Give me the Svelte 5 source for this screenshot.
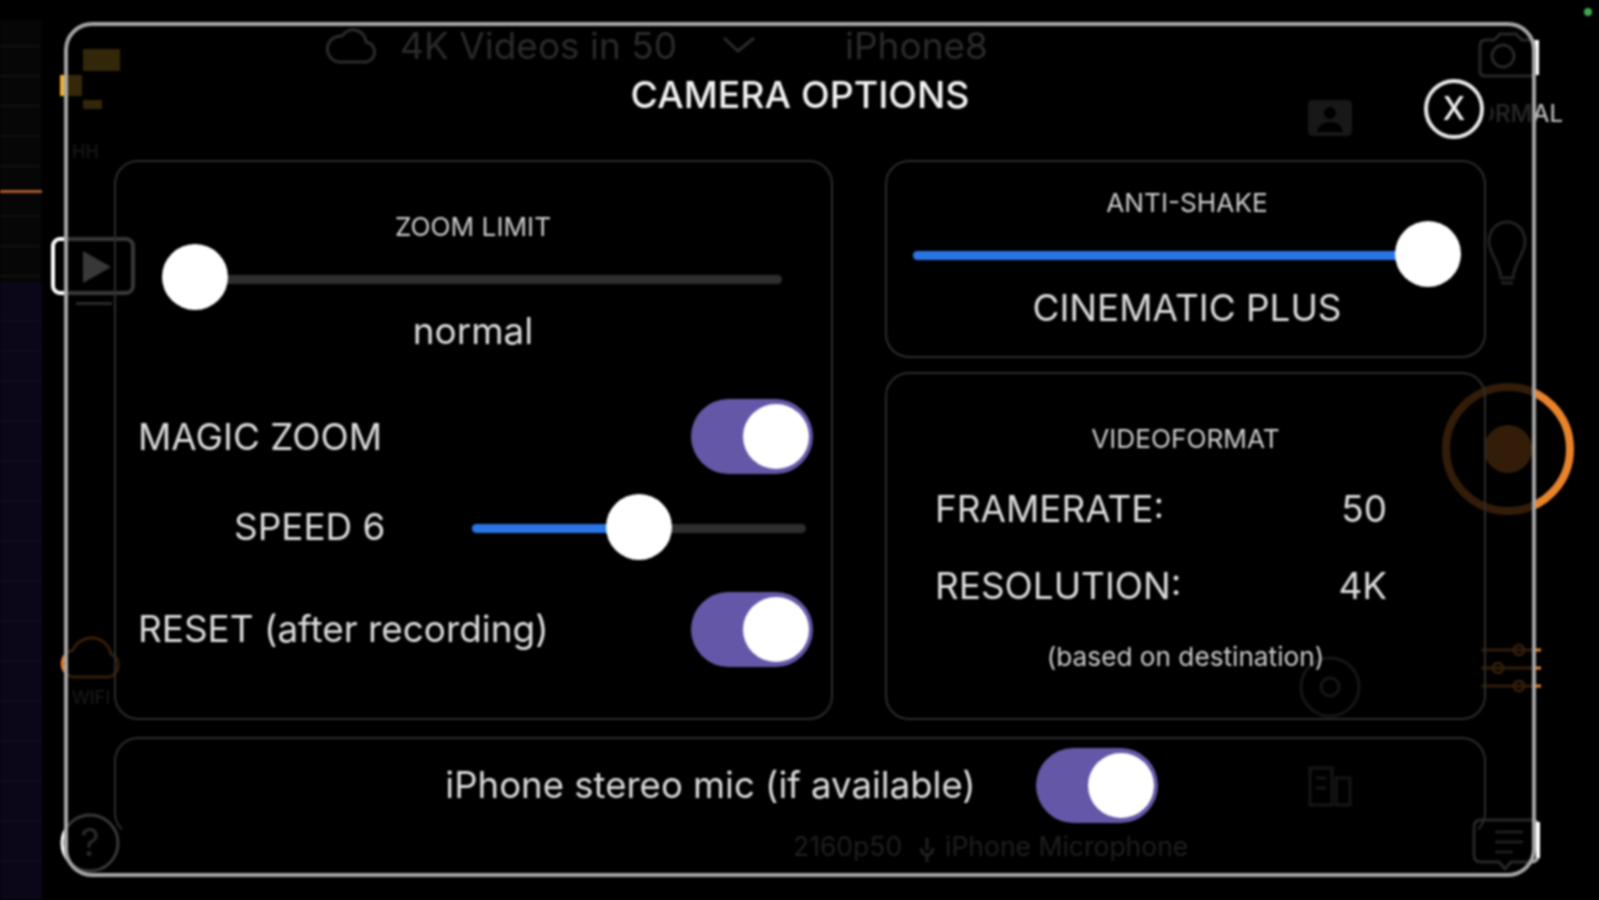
<script>
  // left strip rows behind the dimmed modal
  const stripRows = [45, 75, 105, 135, 165, 215, 245, 275, 320, 350, 380, 420, 460, 500, 540, 580, 620, 660, 700, 740, 780, 820, 860];

  let magicZoom = $state(true);
  let resetAfter = $state(true);
  let stereoMic = $state(true);

  let zoomLimit = $state(0);
  let speed = $state(50);
  let antiShake = $state(100);
</script>

{#snippet toggle(on, flip)}
  <button class="toggle" class:on aria-label="toggle" onclick={flip}><span class="knob"></span></button>
{/snippet}

{#snippet slider(value, cls)}
  <div class="slider {cls}" style="--pct: {value}">
    <div class="track"><div class="fill"></div></div>
    <div class="thumb"></div>
  </div>
{/snippet}

<div class="page">
  <svg class="backdrop" width="1599" height="900" viewBox="0 0 1599 900" aria-hidden="true">
    <rect x="0" y="20" width="42" height="262" fill="#060606" />
    <rect x="0" y="282" width="42" height="618" fill="#0b0718" />
    {#each stripRows as y}
      <rect x="0" {y} width="40" height="2" fill={y < 282 ? '#111' : '#100c1f'} />
    {/each}
    <rect x="0" y="190" width="42" height="3" fill="#a8552c" />

    <!-- top bar -->
    <path d="M339 62h24a10 10 0 0 0 3-20 13 13 0 0 0-24-6 11 11 0 0 0-3 26z" fill="none" stroke="#c4c4c4" stroke-width="3" />
    <text x="400" y="59" class="ghost-title">4K Videos in 50</text>
    <path d="M724 38l14 13 16-13" fill="none" stroke="#c4c4c4" stroke-width="3" />
    <text x="845" y="59" class="ghost-title">iPhone8</text>

    <!-- left tools -->
    <rect x="83" y="49" width="37" height="22" fill="#e9b02c" />
    <rect x="60" y="75" width="22" height="21" fill="#f0b030" />
    <rect x="83" y="100" width="19" height="9" fill="#e9b02c" />
    <text x="72" y="158" class="ghost-small">HH</text>
    <rect x="53" y="239" width="80" height="54" rx="7" fill="none" stroke="#fff" stroke-width="4" />
    <path d="M83 251l28 16-28 16z" fill="#fff" />
    <rect x="76" y="302" width="36" height="3" fill="#bbb" />
    <path d="M72 677h36a12 12 0 0 0 3-23 20 20 0 0 0-38-4 14 14 0 0 0-1 27z" fill="none" stroke="#e8832a" stroke-width="3" />
    <text x="72" y="704" class="ghost-small">WIFI</text>
    <circle cx="90" cy="843" r="28" fill="none" stroke="#fff" stroke-width="3" />
    <text x="90" y="856" class="ghost-q">?</text>

    <!-- right tools -->
    <path d="M1480 72V46q0-6 6-6h8l6-6h16l6 6h8q6 0 6 6v26q0 4-6 4h-44q-6 0-6-4z" fill="none" stroke="#b0b0b0" stroke-width="3" />
    <path d="M1537 40v35" stroke="#fff" stroke-width="4" />
    <circle cx="1503" cy="56" r="11" fill="none" stroke="#b0b0b0" stroke-width="3" />
    <text x="1563" y="122" text-anchor="end" class="ghost-normal">NORMAL</text>
    <path d="M1507 222c-12 0-18 10-18 20 0 12 11 20 12 36h12c1-16 12-24 12-36 0-10-6-20-18-20zM1501 283h12" fill="none" stroke="#999" stroke-width="3" />
    <circle cx="1508" cy="449" r="62" fill="none" stroke="#e8832a" stroke-width="8" />
    <circle cx="1508" cy="449" r="24" fill="#e8832a" />
    <g stroke="#e8832a" stroke-width="3" fill="none">
      <path d="M1481 650h60M1481 668h60M1481 686h60" />
      <circle cx="1519" cy="650" r="5" />
      <circle cx="1498" cy="668" r="5" />
      <circle cx="1519" cy="686" r="5" />
    </g>
    <path d="M1481 820h50q7 0 7 7v28q0 7-7 7h-20l-6 7-6-7h-18q-7 0-7-7v-28q0-7 7-7z" fill="none" stroke="#b0b0b0" stroke-width="3" />
    <path d="M1538 822v36" stroke="#fff" stroke-width="4" />
    <path d="M1495 832h28M1495 842h28M1495 852h18" stroke="#999" stroke-width="2.5" />

    <!-- inner column -->
    <path d="M1313 100h34q5 0 5 5v26q0 5-5 5h-34q-5 0-5-5v-26q0-5 5-5z" fill="#707070" />
    <circle cx="1330" cy="113" r="6" fill="#000" />
    <path d="M1317 132q2-10 13-10t13 10z" fill="#000" />
    <circle cx="1330" cy="687" r="29" fill="none" stroke="#666" stroke-width="3" />
    <circle cx="1330" cy="687" r="9" fill="none" stroke="#666" stroke-width="3" />
    <g fill="none" stroke="#666" stroke-width="3">
      <rect x="1310" y="768" width="22" height="37" />
      <rect x="1336" y="778" width="14" height="27" />
      <path d="M1316 778h10M1316 788h10" />
    </g>

    <!-- bottom status -->
    <text x="793" y="856" class="ghost-status">2160p50</text>
    <path d="M927 838v12M921 848q1 7 6 7t6-7M927 855v7" fill="none" stroke="#909090" stroke-width="3" />
    <text x="945" y="856" class="ghost-status">iPhone Microphone</text>

    <circle cx="1588" cy="12" r="4" fill="#3ea84f" />
  </svg>

  <div class="modal">
    <header>
      <span></span>
      <h1>CAMERA OPTIONS</h1>
      <button class="close">X</button>
    </header>

    <div class="panels">
      <section class="panel zoom">
        <div class="label">ZOOM LIMIT</div>
        {@render slider(zoomLimit, 's-zoom')}
        <div class="big center">normal</div>

        <div class="row magic">
          <span class="big">MAGIC ZOOM</span>
          {@render toggle(magicZoom, () => (magicZoom = !magicZoom))}
        </div>
        <div class="row speed">
          <span class="big">SPEED 6</span>
          {@render slider(speed, 's-speed')}
        </div>
        <div class="row reset">
          <span class="big">RESET (after recording)</span>
          {@render toggle(resetAfter, () => (resetAfter = !resetAfter))}
        </div>
      </section>

      <div class="rightcol">
        <section class="panel shake">
          <div class="label">ANTI-SHAKE</div>
          {@render slider(antiShake, 's-shake')}
          <div class="big center">CINEMATIC PLUS</div>
        </section>

        <section class="panel format">
          <div class="label">VIDEOFORMAT</div>
          <div class="fmt first"><span class="big">FRAMERATE:</span><span class="big">50</span></div>
          <div class="fmt"><span class="big">RESOLUTION:</span><span class="big">4K</span></div>
          <div class="label note">(based on destination)</div>
        </section>
      </div>
    </div>

    <section class="panel stereo">
      <span class="big">iPhone stereo mic (if available)</span>
      {@render toggle(stereoMic, () => (stereoMic = !stereoMic))}
    </section>
  </div>
</div>

<style>
  :global(body) {
    background: #000;
  }

  .page {
    position: relative;
    width: 1599px;
    height: 900px;
    overflow: hidden;
    box-sizing: border-box;
    padding: 22px 0 0 64px;
    background: #000;
    font-family: Inter, "Liberation Sans", sans-serif;
    filter: blur(1px);
  }

  .backdrop {
    position: absolute;
    left: 0;
    top: 0;
  }

  .ghost-title {
    font-size: 37px;
    fill: #c0c0c0;
  }
  .ghost-small {
    font-size: 18px;
    fill: #777;
  }
  .ghost-q {
    font-size: 38px;
    fill: #bbb;
    text-anchor: middle;
  }
  .ghost-normal {
    font-size: 24px;
    font-weight: 500;
    fill: #b4b4b4;
  }
  .ghost-status {
    font-size: 26.5px;
    fill: #888;
  }

  .modal {
    position: relative;
    box-sizing: border-box;
    width: 1472px;
    height: 855px;
    padding: 0 46px;
    border: 4px solid #a4a4a4;
    border-radius: 28px;
    background: rgba(0, 0, 0, 0.78);
    color: #dcdcdc;
  }

  header {
    display: grid;
    grid-template-columns: 1fr auto 1fr;
    align-items: start;
    height: 134px;
  }

  h1 {
    margin: 47px 0 0;
    font-size: 37.4px;
    line-height: 44px;
    font-weight: 500;
    color: #f2f2f2;
  }

  .close {
    justify-self: end;
    width: 60px;
    height: 60px;
    margin-top: 53px;
    margin-right: 2px;
    padding: 0;
    box-sizing: border-box;
    border: 4px solid #e8e8e8;
    border-radius: 50%;
    background: #000;
    box-shadow: 0 0 0 7px #000;
    color: #f0f0f0;
    font: 500 32px/1 Inter, "Liberation Sans", sans-serif;
  }

  .panels {
    display: grid;
    grid-template-columns: 719px 601px;
    gap: 52px;
  }

  .panel {
    box-sizing: border-box;
    border: 2px solid #2c2c2c;
    border-radius: 24px;
  }

  .rightcol {
    display: flex;
    flex-direction: column;
    gap: 14px;
  }

  .label {
    font-size: 26.2px;
    line-height: 30px;
    text-align: center;
    color: #cccccc;
  }

  .big {
    font-size: 36.9px;
    line-height: 44px;
    color: #dcdcdc;
    white-space: nowrap;
  }
  .center {
    display: block;
    text-align: center;
  }

  .zoom {
    height: 560px;
    padding: 50px 18px 0 22px;
  }
  .zoom .label,
  .zoom .center {
    margin-right: 5px;
  }
  .zoom .center {
    margin-top: -2px;
    margin-bottom: 2px;
  }
  .row {
    display: flex;
    align-items: center;
    justify-content: space-between;
  }
  .magic {
    margin-top: 46px;
  }
  .speed {
    margin-top: 20px;
    padding-left: 96px;
    padding-right: 7px;
  }
  .reset {
    margin-top: 32px;
  }
  .reset .big {
    margin-top: -1px;
  }

  .shake {
    height: 198px;
    padding: 26px 23px 0 26px;
  }
  .shake .center {
    margin-top: -1px;
  }
  .format {
    height: 348px;
    padding-top: 50px;
  }
  .fmt {
    display: flex;
    justify-content: space-between;
    margin-top: 33px;
    padding: 0 97px 0 48px;
  }
  .fmt.first {
    margin-top: 33px;
  }
  .note {
    margin-top: 34px;
  }

  .stereo {
    display: flex;
    align-items: center;
    justify-content: center;
    gap: 60px;
    height: 100px;
    margin-top: 17px;
    padding: 0 0 4px 3px;
    border-bottom-color: transparent;
  }
  .stereo .big {
    font-size: 36.55px;
  }

  .toggle {
    position: relative;
    flex: none;
    width: 122px;
    height: 75px;
    padding: 0;
    border: 0;
    border-radius: 38px;
    background: #4a4a4a;
  }
  .toggle.on {
    background: #6557a7;
  }
  .knob {
    position: absolute;
    left: 4px;
    top: 5px;
    width: 66px;
    height: 65px;
    border-radius: 50%;
    background: #fff;
  }
  .toggle.on .knob {
    left: 52px;
  }

  .slider {
    position: relative;
    height: 66px;
  }
  .track {
    position: absolute;
    left: 0;
    right: 0;
    top: 30px;
    height: 9px;
    border-radius: 5px;
    background: #2e2e2e;
  }
  .fill {
    height: 100%;
    border-radius: 5px;
    width: calc((100% - 66px) * var(--pct) / 100 + 33px);
    background: #2a74e6;
  }
  .thumb {
    position: absolute;
    top: 0;
    left: calc((100% - 66px) * var(--pct) / 100);
    width: 66px;
    height: 66px;
    border-radius: 50%;
    background: #fff;
  }
  .s-zoom {
    width: 620px;
    margin: 2px 0 1px 24px;
  }
  .s-zoom .track {
    top: 31px;
  }
  .s-zoom .fill {
    display: none;
  }
  .s-speed {
    width: 334px;
  }
  .s-shake {
    width: 548px;
    margin-top: 3px;
  }
</style>
